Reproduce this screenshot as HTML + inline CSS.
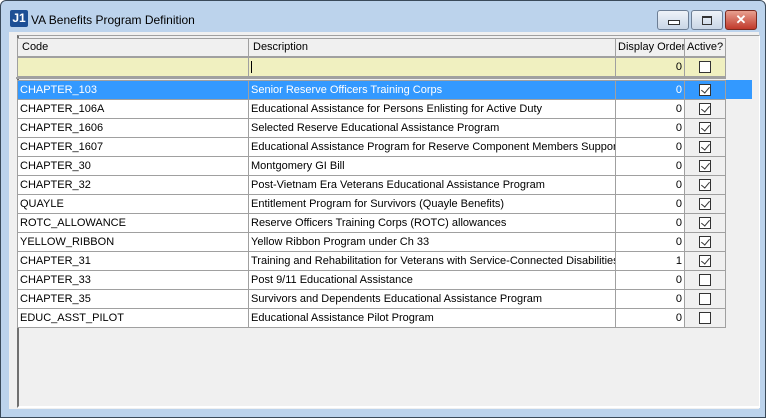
<!DOCTYPE html><html><head><style>
body{margin:0;width:766px;height:418px;overflow:hidden;font-family:"Liberation Sans",Arial,sans-serif;font-size:11px;}
.win{position:absolute;left:0;top:0;width:764px;height:416px;background:#bcd3ec;border:1px solid #3a4a5a;border-radius:6px 6px 0 0;}
.title{position:absolute;left:30px;top:12px;font-size:12px;color:#000;}
.logo{position:absolute;left:9px;top:9px;width:18px;height:17px;background:#1d4f95;color:#fff;font-weight:bold;font-size:12px;line-height:17px;text-align:center;border-radius:2px}
.btn{position:absolute;top:9px;height:18px;border:1px solid #6c7e95;border-radius:3px;background:linear-gradient(#eef3f9,#c9d6e6)}
.client{position:absolute;left:8px;top:31px;width:750px;height:377px;background:#f0f0f0;}
.panel{position:absolute;left:8px;top:3px;width:740px;height:370px;border-left:2px solid #707070;border-top:1px solid #a0a0a0;border-right:1px solid #fff;border-bottom:2px solid #fff;}
.c{position:absolute;box-sizing:border-box;border:1px solid #a0a0a0;height:20px;line-height:18px;padding-left:2px;white-space:nowrap;overflow:hidden;background:#fff;}
.h{background:#f0f0f0;border-color:#a0a0a0;height:19px;line-height:17px;padding-left:4px}
.f{background:#f0f0c0;}
.r{text-align:right;padding-right:2px}
.cb{position:absolute;width:12px;height:12px;border:1px solid #333;background:#fff;box-sizing:border-box;}
.cb.k::after{content:"";position:absolute;left:3px;top:0px;width:4px;height:7px;border:solid #333;border-width:0 1.5px 1.5px 0;transform:rotate(40deg);}
</style></head><body>
<div class="win">
<div class="logo">J1</div><div class="title">VA Benefits Program Definition</div>
<div class="btn" style="left:656px;width:30px"><div style="position:absolute;left:10px;top:9px;width:10px;height:3px;border:1px solid #333;background:#fff"></div></div>
<div class="btn" style="left:690px;width:30px"><div style="position:absolute;left:10px;top:5px;width:8px;height:6px;border:1px solid #333;border-top-width:2px"></div></div>
<div class="btn" style="left:724px;width:30px;background:linear-gradient(#e8a090,#c0392b);border-color:#7a2a20;color:#fff;font-weight:bold;text-align:center;line-height:17px;font-size:13px">✕</div>
<div class="client"><div class="panel"></div></div>
</div>
<div id="g"></div>
<script>
var rows=[["CHAPTER_103","Senior Reserve Officers Training Corps",0,1],["CHAPTER_106A","Educational Assistance for Persons Enlisting for Active Duty",0,1],["CHAPTER_1606","Selected Reserve Educational Assistance Program",0,1],["CHAPTER_1607","Educational Assistance Program for Reserve Component Members Supporting Contingency",0,1],["CHAPTER_30","Montgomery GI Bill",0,1],["CHAPTER_32","Post-Vietnam Era Veterans Educational Assistance Program",0,1],["QUAYLE","Entitlement Program for Survivors (Quayle Benefits)",0,1],["ROTC_ALLOWANCE","Reserve Officers Training Corps (ROTC) allowances",0,1],["YELLOW_RIBBON","Yellow Ribbon Program under Ch 33",0,1],["CHAPTER_31","Training and Rehabilitation for Veterans with Service-Connected Disabilities",1,1],["CHAPTER_33","Post 9/11 Educational Assistance",0,0],["CHAPTER_35","Survivors and Dependents Educational Assistance Program",0,0],["EDUC_ASST_PILOT","Educational Assistance Pilot Program",0,0]];
var h="";
function cell(x,y,w,cls,txt,st){return '<div class="c '+cls+'" style="left:'+x+'px;top:'+y+'px;width:'+w+'px;'+(st||'')+'">'+txt+'</div>';}
h+=cell(17,38,232,"h","Code")+cell(248,38,368,"h","Description")+cell(615,38,70,"h","Display Order","padding-left:2px")+cell(684,38,42,"h","Active?","padding-left:2px");
h+=cell(17,57,232,"f","")+cell(248,57,368,"f","<span style='border-left:1px solid #000'>&nbsp;</span>")+cell(615,57,70,"f r","0")+cell(684,57,42,"f","");
h+='<div class="cb" style="left:699px;top:61px"></div>';
h+='<div style="position:absolute;left:16px;top:77px;width:710px;height:2px;background:#a0a0a0"></div>';
for(var i=0;i<rows.length;i++){var y=80+i*19,r=rows[i],s=i==0;
 if(s)h+='<div style="position:absolute;left:17px;top:'+y+'px;width:735px;height:19px;background:#3399ff"></div>';
 var bg=s?"background:#3399ff;color:#fff;":"";
 h+=cell(17,y,232,"",r[0],bg)+cell(248,y,368,"",r[1],bg)+cell(615,y,70,"r",r[2],bg)+cell(684,y,42,"","",s?bg:"background:#f0f0f0");
 h+='<div class="cb'+(r[3]?' k':'')+'" style="left:699px;top:'+(y+4)+'px"></div>';}
document.getElementById("g").innerHTML=h;
</script>
</body></html>
